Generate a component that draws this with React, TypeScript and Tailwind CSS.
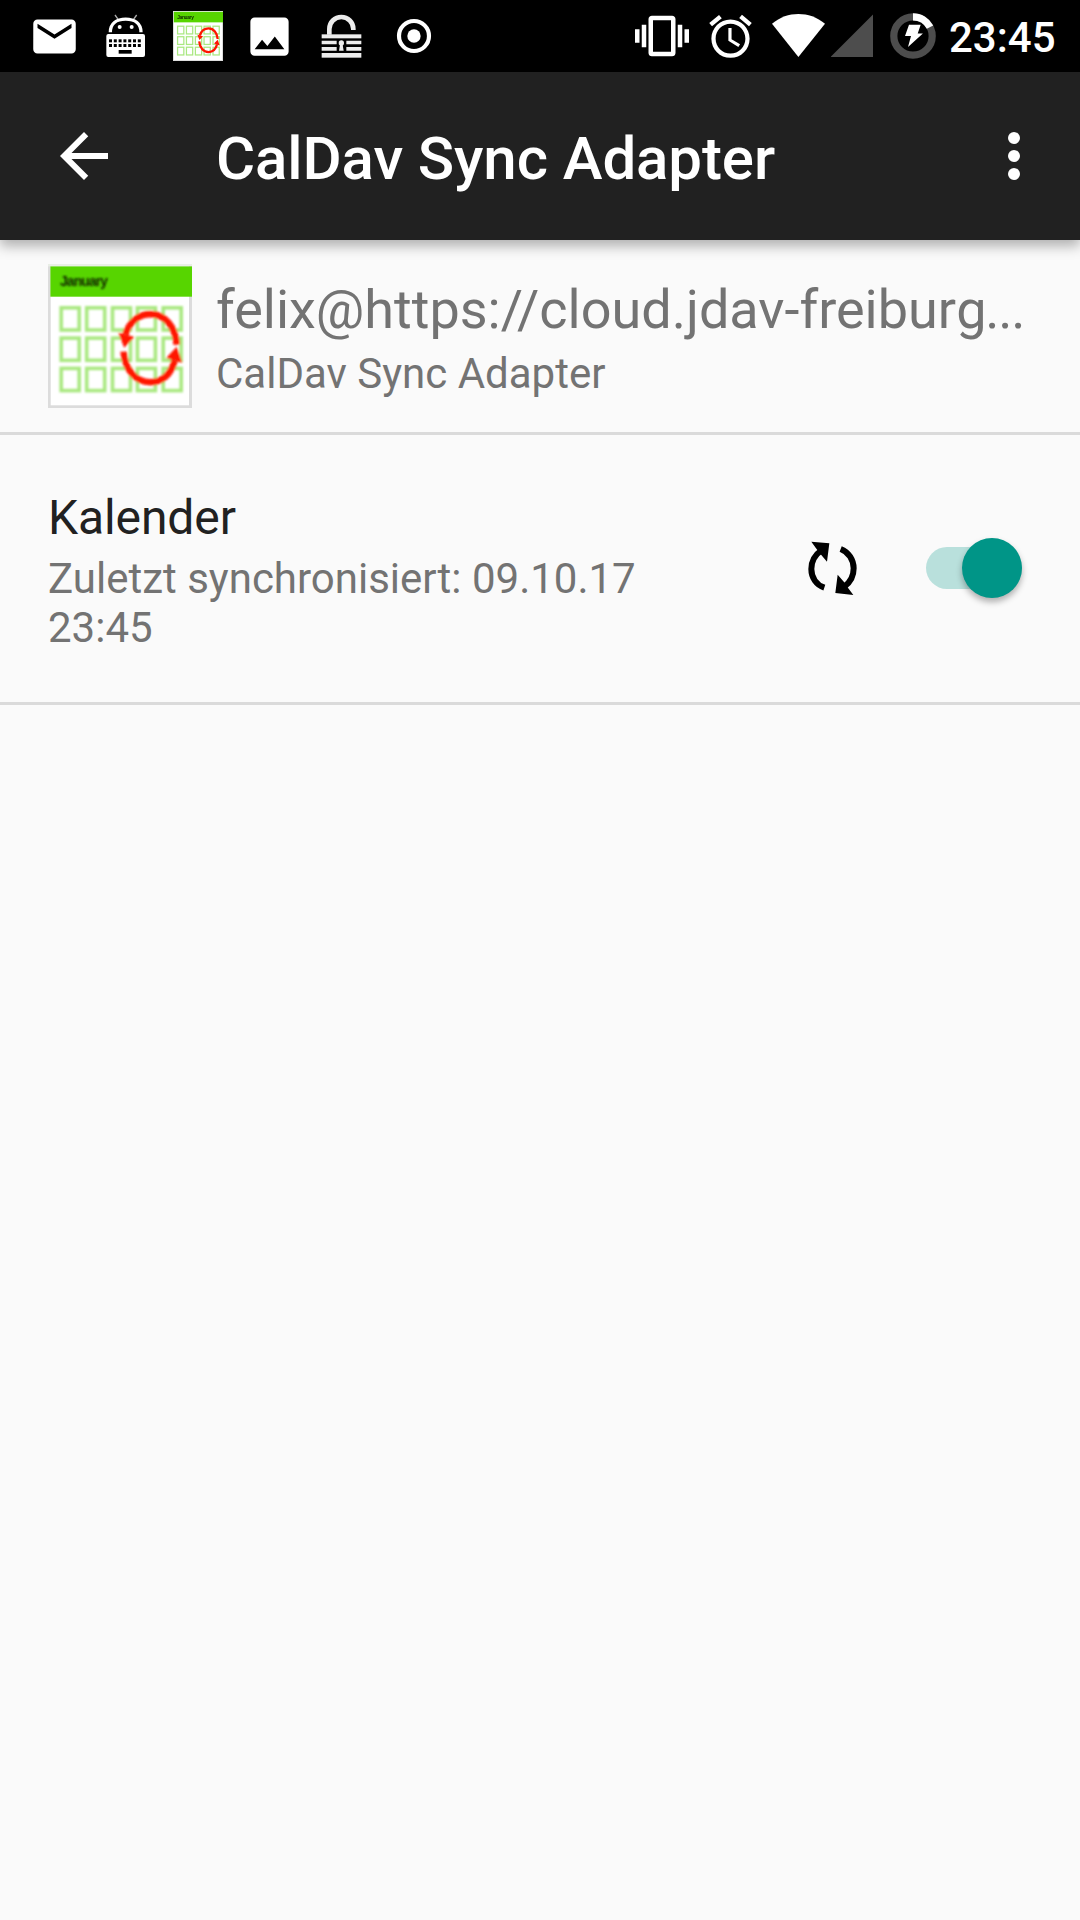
import type { ReactNode } from 'react';

const MAIL =
  'M20 4H4c-1.1 0-1.99.9-1.99 2L2 18c0 1.1.9 2 2 2h16c1.1 0 2-.9 2-2V6c0-1.1-.9-2-2-2zm0 4l-8 5-8-5V6l8 5 8-5v2z';
const IMAGE =
  'M21 19V5c0-1.1-.9-2-2-2H5c-1.1 0-2 .9-2 2v14c0 1.1.9 2 2 2h14c1.1 0 2-.9 2-2zM8.5 13.5l2.5 3.01L14.5 12l4.5 6H5l3.5-4.5z';
const VIBRATION =
  'M0 15h2V9H0v6zm3 2h2V7H3v10zm19-8v6h2V9h-2zm-3 8h2V7h-2v10zM16.5 3h-9C6.67 3 6 3.67 6 4.5v15c0 .83.67 1.5 1.5 1.5h9c.83 0 1.5-.67 1.5-1.5v-15c0-.83-.67-1.5-1.5-1.5zM16 19H8V5h8v14z';
const ALARM =
  'M22 5.7l-4.6-3.9-1.3 1.5 4.6 3.9L22 5.7zM7.9 3.4L6.6 1.9 2 5.7l1.3 1.5 4.6-3.8zM12.5 8H11v6l4.7 2.9.8-1.2-4-2.4V8zM12 4c-5 0-9 4-9 9s4 9 9 9 9-4 9-9-4-9-9-9zm0 16c-3.9 0-7-3.1-7-7s3.1-7 7-7 7 3.1 7 7-3.1 7-7 7z';

function CalendarIcon({ className }: { className: string }) {
  return (
    <svg className={className} viewBox="0 0 48 48">
      <defs>
        <filter id="soft" x="-5%" y="-5%" width="110%" height="110%">
          <feGaussianBlur stdDeviation="0.3" />
        </filter>
      </defs>
      <rect width="48" height="48" fill="#dcdcdc" />
      <rect width="48" height="0.8" fill="#e9eee6" />
      <rect x="0.9" y="0.8" width="46.1" height="46.3" fill="#fff" />
      <rect x="0.8" y="0.8" width="47.2" height="10.1" fill="#57d500" />
      <g filter="url(#soft)">
        <text x="4" y="7.3" fontSize="4.6" fontWeight="700" fill="#0d2600" fontFamily="Liberation Sans, sans-serif" textLength="16">
          January
        </text>
        {[14.6, 24.7, 34.8].map((y) =>
          [4.4, 12.9, 21.5, 29.8, 38.4].map((x) => (
            <rect key={`${x}-${y}`} x={x} y={y} width="6" height="7.4" fill="none" stroke="#a9e880" strokeWidth="1.2" />
          )),
        )}
        <path d="M25.8 23.5C27.2 19 30.5 16.7 34.1 16.7c5 0 8.4 4.4 8.8 10.2" fill="none" stroke="#ff1200" strokeWidth="2.2" />
        <path d="M25.2 29.2c.4 6 4 10.2 8.9 10.2 3.9 0 7-2.7 8.1-7.2" fill="none" stroke="#ff1200" strokeWidth="2.2" />
        <path d="M23.4 22.8l5.4 1.5-3.4 3.6zM44.8 33l-5.4-1.7 3.5-3.7z" fill="#ff1200" />
      </g>
    </svg>
  );
}

function KeyboardIcon() {
  return (
    <svg className="size-[72px]" viewBox="0 0 216 216">
      <path d="M75 45l10 14M140 45l-10 14" stroke="#aaa" strokeWidth="4" />
      <path d="M61 97C61 70 81 57.5 107 57.5S153 70 153 97" fill="none" stroke="#fff" strokeWidth="10" />
      <circle cx="89" cy="81" r="6" fill="#fff" />
      <circle cx="125" cy="81" r="6" fill="#fff" />
      <rect x="49" y="102" width="116" height="69" rx="6" fill="#fff" />
      {[57, 71.4, 85.8, 100.2, 114.6, 129, 143.4].map((x) => (
        <g key={x}>
          <rect x={x} y="118" width="9" height="9" fill="#000" />
          <rect x={x} y="132" width="9" height="9" fill="#000" />
        </g>
      ))}
      <rect x="86" y="150" width="39" height="11" fill="#000" />
    </svg>
  );
}

function LockIcon() {
  return (
    <svg className="size-[72px]" viewBox="0 0 216 216">
      <path d="M70 104V87a36 36 0 0 1 72 0v3" fill="none" stroke="#ececec" strokeWidth="14" />
      <g fill="#ececec">
        <rect x="47" y="103" width="119" height="12" />
        <path d="M47 122h45v11H47zM121 122h45v11h-45zM47 141h45v11H47zM121 141h45v11h-45z" />
        <rect x="47" y="159" width="119" height="14" />
        <circle cx="106" cy="129" r="8" />
        <path d="M103 129h6l4 23h-14z" />
      </g>
    </svg>
  );
}

function Cell({ children }: { children: ReactNode }) {
  return <div className="flex size-[72px] items-center pl-2.5">{children}</div>;
}

function StatusBar() {
  return (
    <div className="flex h-[72px] items-center bg-black pl-[18px] text-white">
      <Cell>
        <svg className="ml-px size-[51px]" viewBox="0 0 24 24" fill="currentColor"><path d={MAIL} /></svg>
      </Cell>
      <KeyboardIcon />
      <Cell>
        <CalendarIcon className="ml-px size-[50px]" />
      </Cell>
      <Cell>
        <svg className="size-[51px]" viewBox="0 0 24 24" fill="currentColor"><path d={IMAGE} /></svg>
      </Cell>
      <LockIcon />
      <svg className="size-[72px]" viewBox="0 0 216 216">
        <circle cx="108" cy="108" r="45" fill="none" stroke="#fff" strokeWidth="12.5" />
        <circle cx="108" cy="108" r="20" fill="#fff" />
      </svg>

      <svg className="ml-[185px] size-[54px]" viewBox="0 0 24 24" fill="currentColor"><path d={VIBRATION} /></svg>
      <svg className="ml-4 size-[51px]" viewBox="0 0 24 24" fill="currentColor"><path d={ALARM} /></svg>
      <svg className="ml-4 h-[72px] w-[53px]" viewBox="0 0 53 72" fill="currentColor">
        <path d="M26.4 57L0 23.8C8 17 17 14 26.4 14S45 17 53 23.8z" />
      </svg>
      <svg className="ml-1.5 h-[72px] w-[42px]" viewBox="0 0 42 72">
        <path d="M42 14.5V57H-.5z" fill="#4d4d4d" />
      </svg>
      <svg className="ml-[17px] h-[72px] w-[46px]" viewBox="0 0 46 72">
        <circle cx="23" cy="36" r="19.2" fill="none" stroke="#4d4d4d" strokeWidth="7.2" />
        <path d="M23 16.8a19.2 19.2 0 0 1 17 10.3" fill="none" stroke="#fff" strokeWidth="7.2" />
        <path d="M19 24.7h11.7l-3 8.8h5.2L18 47l3-11h-6z" fill="#fff" />
      </svg>
      <span className="ml-[13px] pt-[3px] text-[42px] leading-[49px] font-medium">23:45</span>
    </div>
  );
}

function AppBar() {
  return (
    <header className="relative flex h-[168px] items-center bg-[#212121] pr-[30px] pl-12 text-white shadow-[0_6px_12px_rgba(0,0,0,0.3)]">
      <svg className="size-[72px]" viewBox="0 0 24 24" fill="currentColor">
        <path d="M20 11H7.83l5.59-5.59L12 4l-8 8 8 8 1.41-1.41L7.83 13H20v-2z" />
      </svg>
      <h1 className="ml-24 flex-1 pt-[5px] text-[60px] leading-[70px] font-medium tracking-[-0.1px]">CalDav Sync Adapter</h1>
      <svg className="size-[72px]" viewBox="0 0 24 24" fill="currentColor">
        <circle cx="12" cy="6" r="2" />
        <circle cx="12" cy="12" r="2" />
        <circle cx="12" cy="18" r="2" />
      </svg>
    </header>
  );
}

function SyncIcon() {
  return (
    <svg className="h-[54px] w-[49px]" viewBox="83 62 147 162">
      <path d="M132 202C108 194 93 172 93 146c0-22 10-42 30-56M181 86c24 9 39 33 39 58 0 23-10 42-28 55" fill="none" stroke="#000" strokeWidth="18" />
      <path d="M93 64l54 5-7 55-19-22-14-18zM219 224l-54-6 7-55 19 22 14 20z" />
    </svg>
  );
}

export default function App() {
  return (
    <div className="flex h-[1920px] w-[1080px] flex-col overflow-hidden bg-[#fafafa] font-['Roboto',sans-serif]">
      <StatusBar />
      <AppBar />

      <section className="flex h-[195px] border-b-[3px] border-[#dadada] pt-6 pl-12 text-[#737373]">
        <CalendarIcon className="size-36 shrink-0" />
        <div className="ml-6 pt-[14px] whitespace-nowrap">
          <p className="text-[54px] leading-[63px]">
            felix@https://cloud.jdav-freibur<span className="tracking-[-1.2px]">g...</span>
          </p>
          <p className="mt-2 text-[42px] leading-[49px]">CalDav Sync Adapter</p>
        </div>
      </section>

      <section className="flex h-[270px] items-center border-b-[3px] border-[#dadada] pl-12">
        <div className="w-[640px] pt-1">
          <p className="text-[48px] leading-[56px] tracking-[-0.1px] text-[#212121]">Kalender</p>
          <p className="mt-2 text-[42px] leading-[49px] text-[#737373]">
            Zuletzt synchronisiert: 09.10.17
            <br />
            23:45
          </p>
        </div>
        <div className="-mt-px ml-[119.5px]">
          <SyncIcon />
        </div>
        <button className="-mt-px ml-[69.5px] flex h-[42px] w-[95.5px] items-center justify-end rounded-full bg-[#b9e0dc]">
          <span className="size-[60px] shrink-0 rounded-full bg-[#009587] shadow-[0_4px_6px_rgba(0,0,0,0.3)]" />
        </button>
      </section>
    </div>
  );
}
